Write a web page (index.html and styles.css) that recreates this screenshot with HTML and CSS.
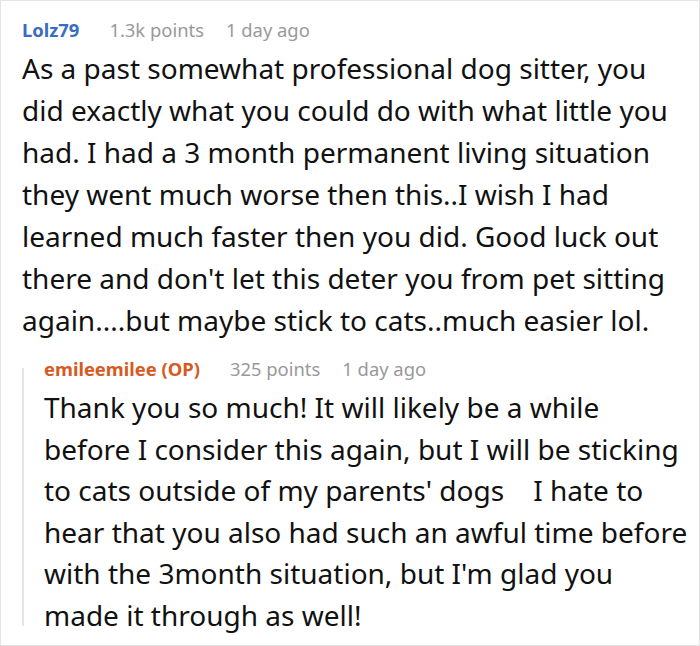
FILE: index.html
```html
<!DOCTYPE html>
<html>
<head>
<meta charset="utf-8">
<link rel="stylesheet" href="styles.css">
</head>
<body>
<div class="card">
  <div class="comment">
    <div class="meta">
      <span class="author">Lolz79</span>
      <span class="points">1.3k points</span>
      <span class="time">1 day ago</span>
    </div>
    <p class="text">As a past somewhat professional dog sitter, you did exactly what you could do with what little you had. I had a 3 month permanent living situation they went much worse then this..I wish I had learned much faster then you did. Good luck out there and don't let this deter you from pet sitting again....but maybe stick to cats..much easier lol.</p>
    <div class="reply">
      <div class="meta">
        <span class="author op">emileemilee (OP)</span>
        <span class="points">325 points</span>
        <span class="time">1 day ago</span>
      </div>
      <p class="text reply-text">Thank you so much! It will likely be a while<br>before I consider this again, but I will be sticking<br>to cats outside of my parents' dogs &nbsp;&nbsp;&nbsp;I hate to<br>hear that you also had such an awful time before<br>with the 3month situation, but I'm glad you<br>made it through as well!</p>
    </div>
  </div>
</div>
</body>
</html>
```

FILE: styles.css
```css
html, body {
  margin: 0;
  padding: 0;
  background: #ffffff;
}
.card {
  box-sizing: border-box;
  width: 700px;
  height: 646px;
  border: 1px solid #e4e4e4;
  padding: 18px 8px 0 21px;
  font-family: "Noto Sans", "Open Sans", sans-serif;
  color: #1a1a1b;
  overflow: hidden;
}
.meta {
  display: flex;
  align-items: baseline;
  font-size: 18.4px;
  line-height: 22px;
  color: #999999;
}
.author {
  font-weight: bold;
  color: #3a6dbf;
  margin-right: 30px;
}
.author.op {
  color: #d75a1e;
}
.points {
  margin-right: 22px;
}
.text {
  margin: 6px 0 0 0;
  font-size: 28px;
  line-height: 42px;
  color: #111111;
}
.reply-text {
  margin-top: 7px;
  line-height: 41.6px;
  white-space: nowrap;
}
.reply {
  margin-top: 17px;
  padding-left: 22px;
  background: linear-gradient(#e6e6e6, #e6e6e6) no-repeat 0 10px / 2px calc(100% - 21px);
}
```
